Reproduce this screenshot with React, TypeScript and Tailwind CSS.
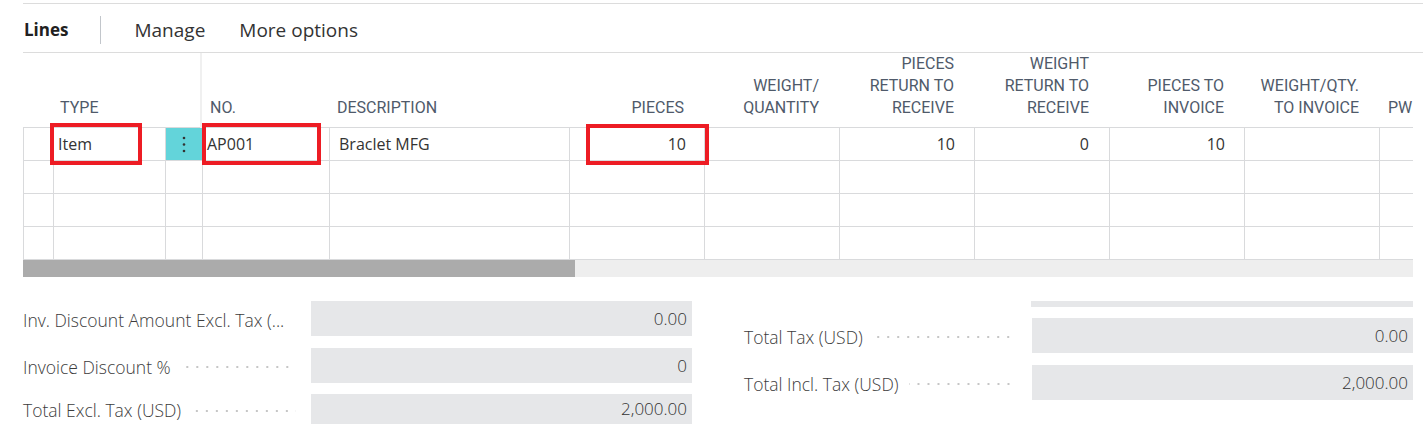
import React from "react";

const grid =
  "grid grid-cols-[30px_112px_37px_127px_240px_135px_135px_135px_135px_135px_135px_135px]";

const headers: { label: React.ReactNode; cls: string }[] = [
  { label: "", cls: "" },
  { label: "Type", cls: "pl-[7px]" },
  { label: "", cls: "border-r-2 border-[#f0f0f0]" },
  { label: "No.", cls: "pl-[8px]" },
  { label: "Description", cls: "pl-[8px]" },
  { label: "Pieces", cls: "justify-end text-right pr-[20px]" },
  { label: <>Weight/<br />Quantity</>, cls: "justify-end text-right pr-[20px]" },
  { label: <>Pieces<br />Return to<br />Receive</>, cls: "justify-end text-right pr-[20px]" },
  { label: <>Weight<br />Return to<br />Receive</>, cls: "justify-end text-right pr-[20px]" },
  { label: <>Pieces to<br />Invoice</>, cls: "justify-end text-right pr-[20px]" },
  { label: <>Weight/Qty.<br />to Invoice</>, cls: "justify-end text-right pr-[20px]" },
  { label: "PW", cls: "pl-[9px]" },
];

function RedBox({ cls }: { cls: string }) {
  return <div className={`absolute border-[4px] border-[#ed1c24] pointer-events-none ${cls}`} />;
}

function Dots() {
  return (
    <div className="flex-1 h-[2px] ml-[10px] mr-[15px] mt-[3px] bg-[linear-gradient(to_right,#c6c6c6_2px,transparent_2px)] bg-[length:10px_2px] bg-repeat-x bg-[position:right_center]" />
  );
}

function Field({ label, value, h = "h-[35px]", cls = "" }: { label: string; value: string; h?: string; cls?: string }) {
  return (
    <div className={`flex items-center ${cls}`}>
      <span className="text-[17.5px] font-light text-[#3c3c3c] whitespace-nowrap pt-[3px]">{label}</span>
      <Dots />
      <div className={`w-[381px] ${h} bg-[#e6e7e9] flex items-center justify-end pr-[5px] text-[17px] text-[#333] font-light`}>
        {value}
      </div>
    </div>
  );
}

export default function App() {
  const bodyCell = "border-l border-[#d9dadc] relative flex items-center text-[16px] text-[#333]";
  const emptyRow = (k: number) => (
    <div key={k} className={`${grid} h-[33px] border-b border-[#d9dadc]`}>
      {headers.map((_, i) => (
        <div key={i} className="border-l border-[#d9dadc]" />
      ))}
    </div>
  );

  return (
    <div className="w-[1423px] h-[438px] bg-white overflow-hidden font-['Open_Sans',sans-serif]">
      <div className="ml-[23px] w-[1400px]">
        <div className="mt-[3px] h-px bg-[#dcdcdc]" />
        {/* action bar */}
        <div className="h-[49px] flex items-center border-b border-[#dcdcdc] pt-[4px]">
          <span className="text-[17px] font-bold text-[#212121] pl-px">Lines</span>
          <div className="w-px h-[28px] bg-[#c2c6cb] ml-[32px]" />
          <span className="text-[19px] text-[#333] ml-[33px]">Manage</span>
          <span className="text-[19px] text-[#333] ml-[34px]">More options</span>
        </div>

        {/* table */}
        <div className="w-[1390px] overflow-hidden">
          <div className={`${grid} h-[75px] border-b border-[#d9dadc] font-['Roboto',sans-serif] font-normal text-[16px] leading-[22px] uppercase text-[#4f5a6a]`}>
            {headers.map((h, i) => (
              <div key={i} className={`flex items-end pb-[10px] whitespace-nowrap ${h.cls}`}>
                <div>{h.label}</div>
              </div>
            ))}
          </div>

          <div className={`${grid} h-[33px] border-b border-[#d9dadc]`}>
            <div className={bodyCell} />
            <div className={`${bodyCell} pl-[4px]`}>
              Item
              <RedBox cls="-left-[4px] -top-[5px] w-[92px] h-[42px]" />
            </div>
            <div className="border-l border-[#d9dadc] bg-[#63d4da] flex items-center justify-center">
              <svg width="4" height="18" viewBox="0 0 4 18">
                <circle cx="2" cy="3" r="1.3" fill="#333" />
                <circle cx="2" cy="9.5" r="1.3" fill="#333" />
                <circle cx="2" cy="16" r="1.3" fill="#333" />
              </svg>
            </div>
            <div className={`${bodyCell} pl-[4px]`}>
              AP001
              <RedBox cls="-left-[1px] -top-[5px] w-[119px] h-[42px]" />
            </div>
            <div className={`${bodyCell} pl-[9px]`}>Braclet MFG</div>
            <div className={`${bodyCell} justify-end pr-[18px]`}>
              10
              <RedBox cls="left-[16px] -top-[4px] w-[123px] h-[41px]" />
            </div>
            <div className={bodyCell} />
            <div className={`${bodyCell} justify-end pr-[19px]`}>10</div>
            <div className={`${bodyCell} justify-end pr-[20px]`}>0</div>
            <div className={`${bodyCell} justify-end pr-[19px]`}>10</div>
            <div className={bodyCell} />
            <div className={bodyCell} />
          </div>
          {[1, 2, 3].map(emptyRow)}

          {/* scrollbar */}
          <div className="h-[17px] bg-[#eeeeee] flex">
            <div className="w-[552px] bg-[#ababab]" />
          </div>
        </div>

        {/* totals */}
        <div className="flex gap-[52px] mt-[24px] w-[1390px]">
          <div className="w-[669px] flex flex-col">
            <Field label="Inv. Discount Amount Excl. Tax (..." value="0.00" />
            <Field label="Invoice Discount %" value="0" cls="mt-[12px]" />
            <Field label="Total Excl. Tax (USD)" value="2,000.00" h="h-[30px]" cls="mt-[11px]" />
          </div>
          <div className="w-[669px] flex flex-col">
            <div className="self-end w-[382px] h-[6px] bg-[#e6e7e9]" />
            <Field label="Total Tax (USD)" value="0.00" cls="mt-[11px]" />
            <Field label="Total Incl. Tax (USD)" value="2,000.00" cls="mt-[12px]" />
          </div>
        </div>
      </div>
    </div>
  );
}
